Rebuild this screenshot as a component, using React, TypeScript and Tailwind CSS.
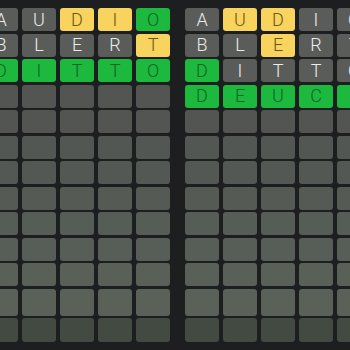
import React from 'react';

type Cell = { ch?: string; c?: 'g' | 'y' | 'x' };

const rowBg = [
  'bg-[#5a5c5a]',
  'bg-[#5a5c5a]',
  'bg-[#5a5c5a]',
  'bg-[#525552]',
  'bg-[#525552]',
  'bg-[#535753]',
  'bg-[#545854]',
  'bg-[#555a55]',
  'bg-[#565c56]',
  'bg-[#575e57]',
  'bg-[#586058]',
  'bg-[#596159]',
  'bg-[#434a42]',
];

const rowH = [
  'h-[23px]', 'h-[23px]', 'h-[23px]', 'h-[23px]', 'h-[23px]', 'h-[23px]', 'h-[23px]',
  'h-[23px]', 'h-[23px]', 'h-[23px]', 'h-[23px]', 'h-[27px]', 'h-[24px]',
];

const parse = (s: string, colors: string): Cell[] =>
  s.split('').map((ch, i) => ({ ch, c: colors[i] as Cell['c'] }));

const leftBoard: Cell[][] = [
  parse('AUDIO', 'xxyyg'),
  parse('BLERT', 'xxxxy'),
  parse('DITTO', 'ggggg'),
];

const rightBoard: Cell[][] = [
  parse('AUDIO', 'xyyxx'),
  parse('BLERT', 'xxyxx'),
  parse('DITTO', 'gxxxx'),
  parse('DEUCE', 'ggggg'),
];

const Tile = ({ cell, row }: { cell?: Cell; row: number }) => {
  let cls = rowBg[row] + ' text-[#ececec]';
  if (cell?.c === 'g') cls = 'bg-[#1db93f] text-[#0e6424]';
  if (cell?.c === 'y') cls = 'bg-[#f8d35e] text-[#6a5314]';
  return (
    <div
      className={`w-[34px] shrink-0 rounded-[3px] flex items-center justify-center text-[18px] leading-none font-light ${rowH[row]} ${cls}`}
    >
      {cell?.ch}
    </div>
  );
};

const Board = ({ rows }: { rows: Cell[][] }) => (
  <div className="flex flex-col gap-[2.5px] shrink-0">
    {rowH.map((_, r) => (
      <div key={r} className="flex gap-[4px]">
        {[0, 1, 2, 3, 4].map((c) => (
          <Tile key={c} cell={rows[r]?.[c]} row={r} />
        ))}
      </div>
    ))}
  </div>
);

export default function App() {
  return (
    <div
      className="w-[350px] h-[350px] overflow-hidden bg-[#1c1e20] pt-[8px]"
      style={{ fontFamily: 'Roboto, "Liberation Sans", sans-serif' }}
    >
      <div className="flex gap-[15px] ml-[-16px]">
        <Board rows={leftBoard} />
        <Board rows={rightBoard} />
      </div>
    </div>
  );
}
